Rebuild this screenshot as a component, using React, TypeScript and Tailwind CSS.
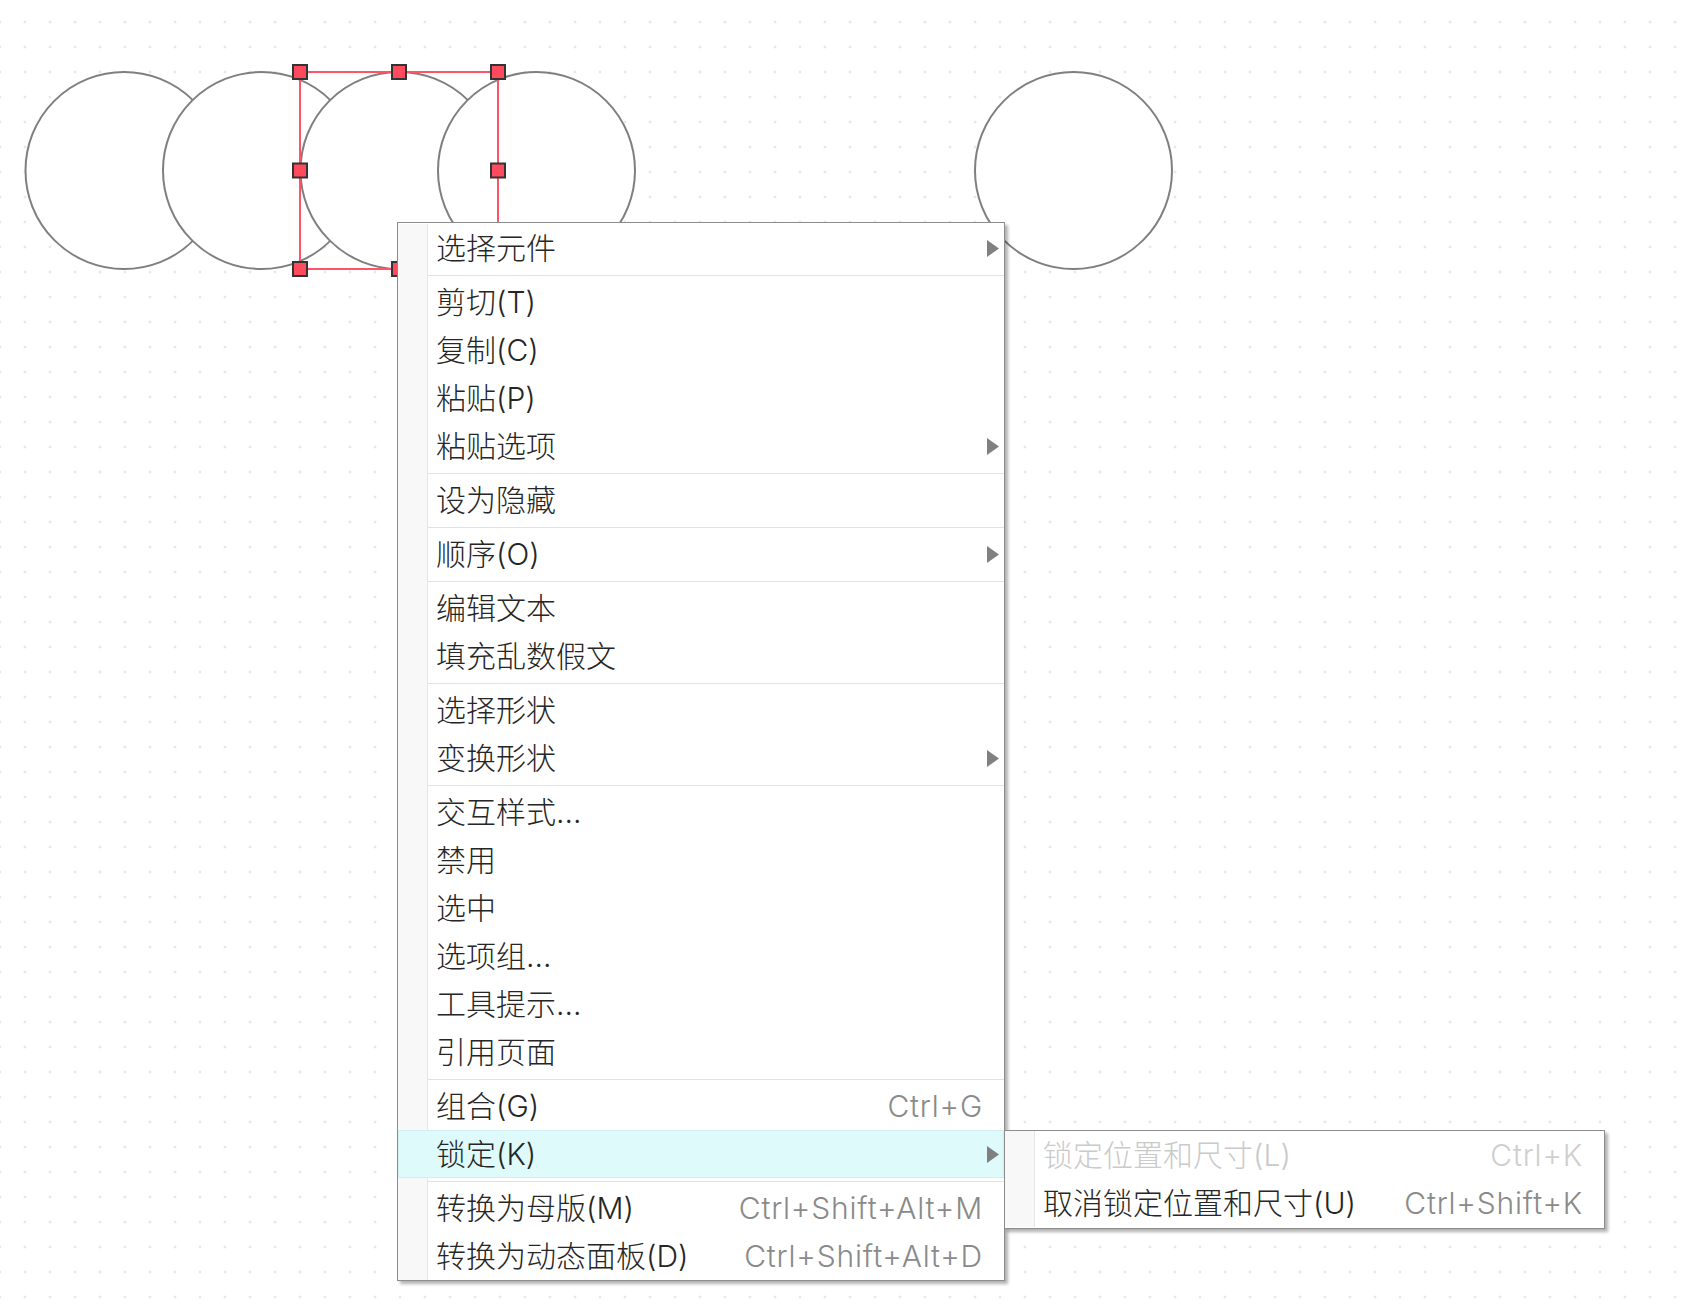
import React from 'react';

type Item = {
  label: string;
  shortcut?: string;
  arrow?: boolean;
  active?: boolean;
  disabled?: boolean;
};
type Entry = Item | 'sep';

const mainMenu: Entry[] = [
  { label: '选择元件', arrow: true },
  'sep',
  { label: '剪切(T)' },
  { label: '复制(C)' },
  { label: '粘贴(P)' },
  { label: '粘贴选项', arrow: true },
  'sep',
  { label: '设为隐藏' },
  'sep',
  { label: '顺序(O)', arrow: true },
  'sep',
  { label: '编辑文本' },
  { label: '填充乱数假文' },
  'sep',
  { label: '选择形状' },
  { label: '变换形状', arrow: true },
  'sep',
  { label: '交互样式...' },
  { label: '禁用' },
  { label: '选中' },
  { label: '选项组...' },
  { label: '工具提示...' },
  { label: '引用页面' },
  'sep',
  { label: '组合(G)', shortcut: 'Ctrl+G' },
  { label: '锁定(K)', arrow: true, active: true },
  'sep',
  { label: '转换为母版(M)', shortcut: 'Ctrl+Shift+Alt+M' },
  { label: '转换为动态面板(D)', shortcut: 'Ctrl+Shift+Alt+D' },
];

const lockMenu: Entry[] = [
  { label: '锁定位置和尺寸(L)', shortcut: 'Ctrl+K', disabled: true },
  { label: '取消锁定位置和尺寸(U)', shortcut: 'Ctrl+Shift+K' },
];

const circles = [124, 261.5, 399, 536.5, 1073.5];
const handles = [
  [300, 72],
  [399, 72],
  [498, 72],
  [300, 170.5],
  [498, 170.5],
  [300, 269],
  [399, 269],
  [498, 269],
];

function Arrow() {
  return (
    <svg width="12" height="17" viewBox="0 0 12 17">
      <polygon points="0,0 12,8.5 0,17" fill="#808080" />
    </svg>
  );
}

function Separator() {
  return (
    <div className="flex h-[6px]">
      <div className="h-full w-[30px] shrink-0 border-r border-[#e6e6e6] bg-[#f8f8f8]" />
      <div className="flex-1 pt-[3px]">
        <div className="h-px bg-[#e2e2e2]" />
      </div>
    </div>
  );
}

function Row({ item }: { item: Item }) {
  return (
    <div
      className={`flex h-12 items-center ${
        item.active ? 'bg-[#dffafa] outline outline-1 -outline-offset-1 outline-[#d2eef0]' : ''
      }`}
    >
      <div
        className={`h-full w-[30px] shrink-0 ${item.active ? '' : 'border-r border-[#e6e6e6] bg-[#f8f8f8]'}`}
      />
      <span className={`flex-1 pl-2 ${item.disabled ? 'text-[#cacaca]' : 'text-[#262626]'}`}>{item.label}</span>
      {item.shortcut && (
        <span className={`-mr-[3px] tracking-[0.8px] ${item.disabled ? 'text-[#cfcfcf]' : 'text-[#8a8a8a]'}`}>
          {item.shortcut}
        </span>
      )}
      <div className="ml-[7px] mr-[5px] flex w-3 shrink-0 justify-center">{item.arrow && <Arrow />}</div>
    </div>
  );
}

function Menu({ entries }: { entries: Entry[] }) {
  return (
    <>
      {entries.map((e, i) => (e === 'sep' ? <Separator key={i} /> : <Row key={i} item={e} />))}
    </>
  );
}

export default function App() {
  return (
    <div className="relative h-[1314px] w-[1682px] overflow-hidden bg-white font-['Inter','Noto_Sans_CJK_SC',sans-serif] text-[30px] font-light leading-none">
      <svg width="1682" height="1314" className="block">
        <defs>
          <pattern id="dots" x="-12.5" y="9.5" width="25" height="25" patternUnits="userSpaceOnUse">
            <circle cx="12.5" cy="12.5" r="1.1" fill="#d2d2d2" />
          </pattern>
        </defs>
        <rect width="1682" height="1314" fill="url(#dots)" />
        {circles.map((cx) => (
          <circle key={cx} cx={cx} cy="170.5" r="98.5" fill="#fff" stroke="#7f7f7f" strokeWidth="2" />
        ))}
        <rect x="300" y="72" width="198" height="197" fill="none" stroke="#ff5466" strokeWidth="2" />
        {handles.map(([x, y]) => (
          <rect
            key={`${x}-${y}`}
            x={x - 7}
            y={y - 7}
            width="14"
            height="14"
            fill="#ff4b5d"
            stroke="#333"
            strokeWidth="2"
          />
        ))}
      </svg>

      <div className="absolute left-[397px] top-[222px] w-[608px] border border-[#8c8c8c] bg-white pt-px shadow-[3px_3px_3px_rgba(0,0,0,0.3)]">
        <Menu entries={mainMenu} />
      </div>

      <div className="absolute left-[1004px] top-[1130px] w-[601px] border border-[#8c8c8c] bg-white pb-px shadow-[3px_3px_3px_rgba(0,0,0,0.3)]">
        <Menu entries={lockMenu} />
      </div>
    </div>
  );
}
